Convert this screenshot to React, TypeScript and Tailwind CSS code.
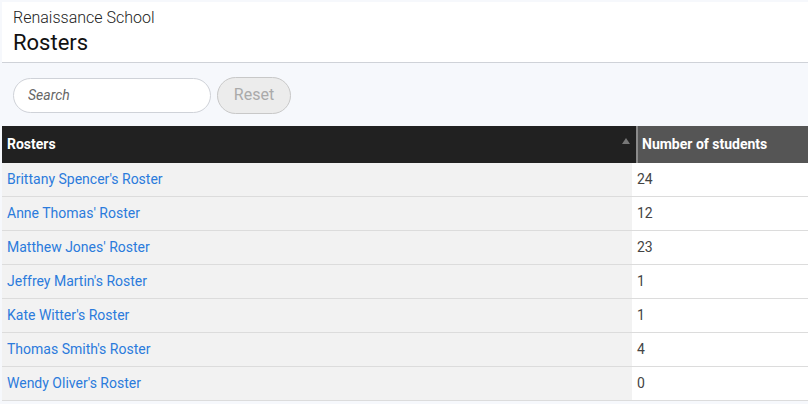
const rosters = [
  { name: "Brittany Spencer's Roster", count: 24 },
  { name: "Anne Thomas' Roster", count: 12 },
  { name: "Matthew Jones' Roster", count: 23 },
  { name: "Jeffrey Martin's Roster", count: 1 },
  { name: "Kate Witter's Roster", count: 1 },
  { name: "Thomas Smith's Roster", count: 4 },
  { name: "Wendy Oliver's Roster", count: 0 },
]

export default function App() {
  return (
    <div
      className="min-h-[404px] bg-[#f6f8fc] pt-[2px] pl-[2px]"
      style={{ fontFamily: 'Roboto, "Liberation Sans", sans-serif' }}
    >
      <div className="h-[61px] bg-white border-b border-[#cfd2d8] pl-[11px] pt-[7px]">
        <div className="text-[16px] leading-[18px] font-light text-[#222]">Renaissance School</div>
        <div className="text-[22px] leading-[26px] text-[#111] mt-[3px]">Rosters</div>
      </div>

      <div className="h-[63px] flex items-center gap-[6px] pl-[11px] pt-[1px]">
        <input
          placeholder="Search"
          className="w-[198px] h-[35px] rounded-full border border-[#cfd2d8] bg-white px-[14px] text-[14px] italic text-[#333] placeholder:text-[#666] outline-none"
        />
        <button className="w-[74px] h-[37px] rounded-full border border-[#c8c8c8] bg-[#ececec] text-[16px] text-[#aaa]">
          Reset
        </button>
      </div>

      <div>
        <div className="flex h-[37px] text-[14px] font-bold text-white">
          <div className="w-[634px] bg-[#212121] flex items-center justify-between pl-[5px] pr-[6px]">
            <span>Rosters</span>
            <svg width="8" height="6" viewBox="0 0 8 6" className="mb-[8px]">
              <path d="M4 0 L8 6 L0 6 Z" fill="#777" />
            </svg>
          </div>
          <div className="w-[2px] bg-[#8a8a8a]" />
          <div className="flex-1 bg-[#555] flex items-center pl-[4px]">Number of students</div>
        </div>
        {rosters.map((r) => (
          <div key={r.name} className="flex h-[34px] border-b border-[#dcdcdc] text-[14px]">
            <div className="w-[630px] bg-[#f2f2f2] flex items-center pl-[5px]">
              <a href="#" className="text-[#2b7bdc]">{r.name}</a>
            </div>
            <div className="flex-1 bg-white flex items-center pl-[5px] text-[#444]">{r.count}</div>
          </div>
        ))}
      </div>
    </div>
  )
}
